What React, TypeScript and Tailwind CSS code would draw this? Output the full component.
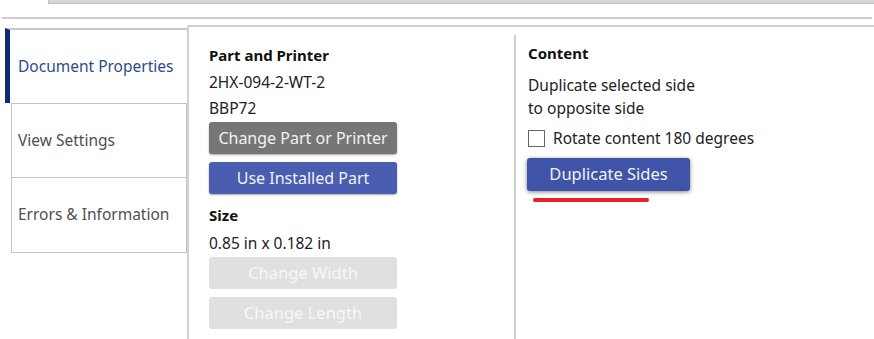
import React from "react";

export default function App() {
  return (
    <div className="relative w-[874px] h-[339px] overflow-hidden bg-white text-[15.5px] text-[#222]" style={{ fontFamily: '"Noto Sans", "Open Sans", sans-serif' }}>
      {/* top strip */}
      <div className="flex h-[4px]">
        <div className="w-[49px] bg-white border-r border-[#c4c4c4]" />
        <div className="flex-1 bg-[#d6d6d6] border-b border-[#c2c2c2]" />
      </div>
      <div className="mt-[13px] mx-[2px] h-[2px] bg-[#cdcdcd]" />
      <div className="flex mt-[6px]">
        {/* tabs */}
        <div className="w-[187px] shrink-0 pt-[3px] pl-[5px]">
          <div className="h-[75px] flex items-center border-t-2 border-t-[#c8c8c8] border-l-[5px] border-l-[#0b2a78] pl-[8px] text-[#2c4c8c]">
            Document Properties
          </div>
          <div className="ml-[6px] h-[75px] flex items-center border border-[#c4c4c4] pl-[6px] text-[#505050]">
            View Settings
          </div>
          <div className="ml-[6px] h-[75px] flex items-center border border-t-0 border-[#c4c4c4] pl-[6px] text-[#505050]">
            Errors &amp; Information
          </div>
        </div>
        {/* panel */}
        <div className="flex-1 flex h-[320px] border-t-2 border-l-2 border-[#d0d0d0]">
          <div className="w-[325px] shrink-0 pl-[20px] pt-[16px] leading-[26px]">
            <div className="font-bold text-[15px] text-[#111] leading-[24px]">Part and Printer</div>
            <div className="mt-[2px]">2HX-094-2-WT-2</div>
            <div>BBP72</div>
            <div className="mt-[1px] w-[188px] h-[32px] rounded-[3px] bg-[#767676] text-[#f2f2f2] text-[16px] flex items-center justify-center shadow-[0_1px_2px_rgba(0,0,0,0.35)]">
              Change Part or Printer
            </div>
            <div className="mt-[8px] w-[188px] h-[32px] rounded-[3px] bg-[#4a5db0] text-[#f2f2f2] text-[16px] flex items-center justify-center shadow-[0_1px_2px_rgba(0,0,0,0.35)]">
              Use Installed Part
            </div>
            <div className="mt-[8px] font-bold text-[15px] text-[#111]">Size</div>
            <div className="mt-[2px]">0.85 in x 0.182 in</div>
            <div className="mt-[1px] w-[188px] h-[32px] rounded-[3px] bg-[#e0e0e0] text-[#f7f7f7] text-[16.5px] flex items-center justify-center">
              Change Width
            </div>
            <div className="mt-[8px] w-[188px] h-[32px] rounded-[3px] bg-[#e0e0e0] text-[#f7f7f7] text-[16.5px] flex items-center justify-center">
              Change Length
            </div>
          </div>
          <div className="mt-[8px] w-[2px] bg-[#cbcfd6]" />
          <div className="pl-[12px] pt-[13px]">
            <div className="font-bold text-[15px] text-[#111] leading-[26px]">Content</div>
            <div className="mt-[8px] leading-[23px]">
              <div>Duplicate selected side</div>
              <div>to opposite side</div>
            </div>
            <div className="mt-[8px] flex items-center gap-[8px] leading-[20px]">
              <div className="w-[17px] h-[17px] border border-[#666] bg-white" />
              <span>Rotate content 180 degrees</span>
            </div>
            <div className="mt-[10px] -ml-[1px] w-[163px] h-[33px] rounded-[3px] bg-[#3f53a8] text-[#f2f2f2] text-[16.5px] flex items-center justify-center shadow-[0_1px_4px_rgba(0,0,0,0.5)]">
              Duplicate Sides
            </div>
            <div className="mt-[7px] ml-[5px] w-[116px] h-[4px] rounded-full bg-[#e8202a]" />
          </div>
        </div>
      </div>
    </div>
  );
}
